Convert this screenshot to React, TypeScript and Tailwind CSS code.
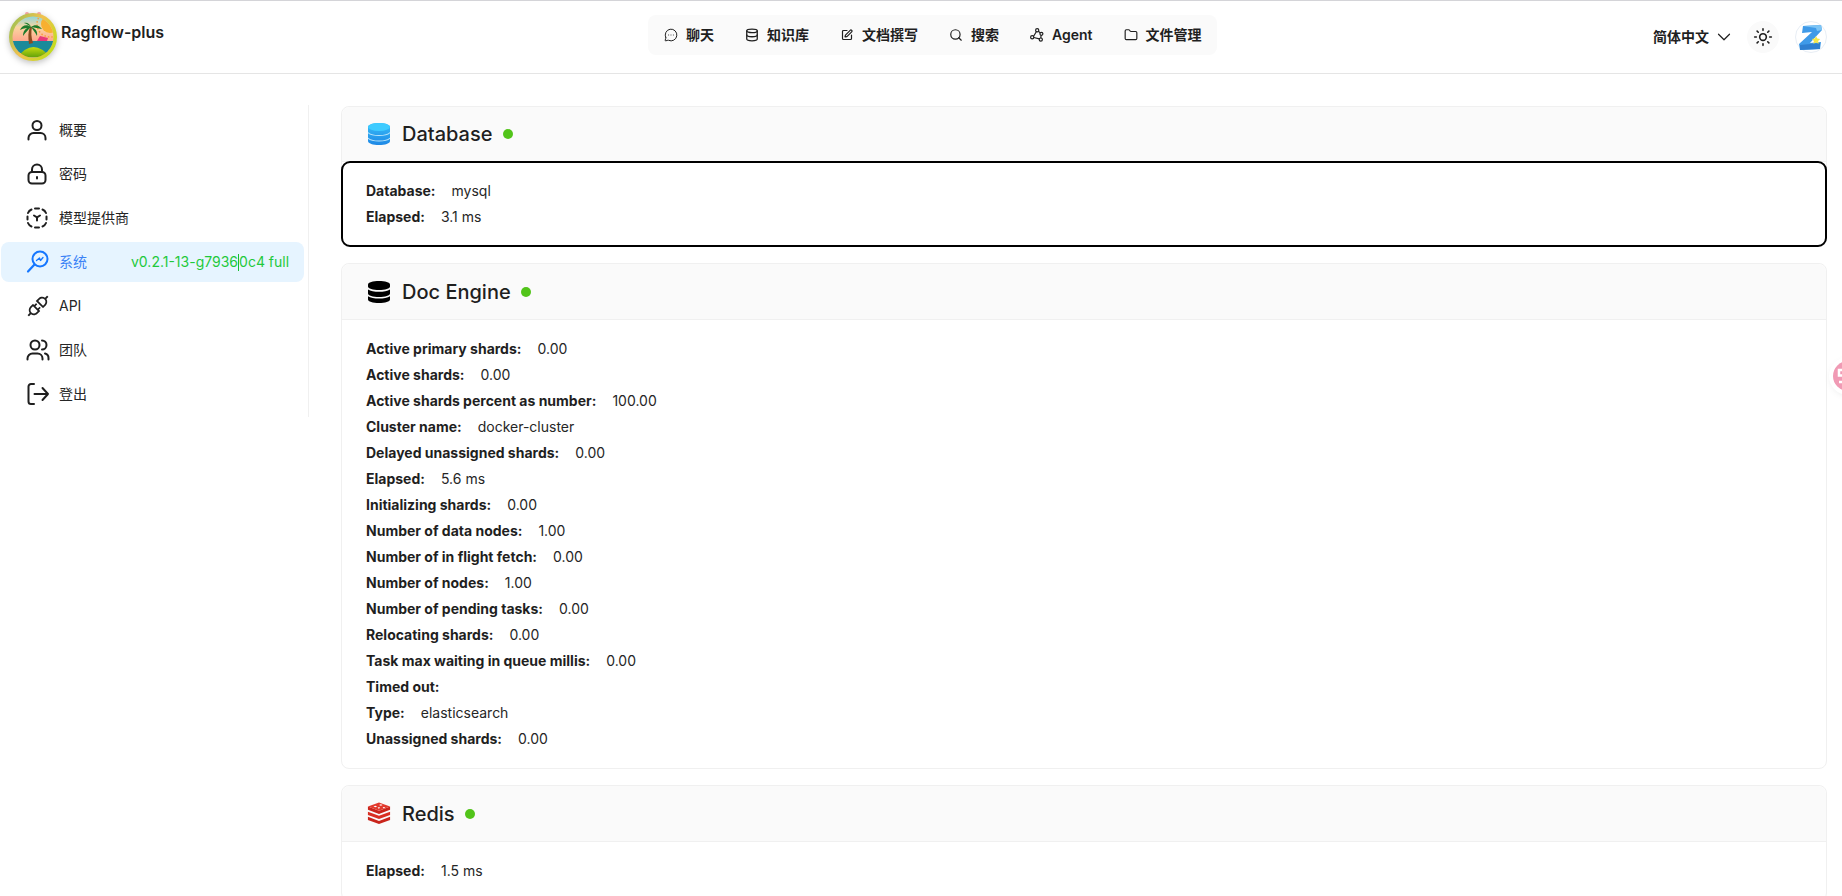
import React from "react";
import { MessageCircleMore, Database, SquarePen, Search, Folder, Sun, ChevronDown } from "lucide-react";
import { AiOutlineApi } from "react-icons/ai";

const font = { fontFamily: 'Inter, "Noto Sans CJK SC", sans-serif' };

function Logo() {
  return (
    <svg width="50" height="52" viewBox="0 0 50 52" className="shrink-0 drop-shadow-[0_2px_3px_rgba(0,0,0,0.25)]">
      <defs>
        <linearGradient id="ring" x1="0" y1="0" x2="1" y2="0.6">
          <stop offset="0" stopColor="#8cc152" />
          <stop offset="0.55" stopColor="#f2c14e" />
          <stop offset="1" stopColor="#c4dc20" />
        </linearGradient>
        <linearGradient id="sky" x1="0" y1="0" x2="0" y2="1">
          <stop offset="0" stopColor="#6fd6e8" />
          <stop offset="0.3" stopColor="#fbd5a0" />
          <stop offset="0.65" stopColor="#ff9c8a" />
        </linearGradient>
        <linearGradient id="isl" x1="0" y1="0" x2="0" y2="1">
          <stop offset="0" stopColor="#c8dc10" />
          <stop offset="1" stopColor="#5a9e0a" />
        </linearGradient>
        <clipPath id="inner"><circle cx="25" cy="27" r="20.5" /></clipPath>
      </defs>
      <circle cx="19" cy="4" r="2" fill="#f0a0a0" />
      <circle cx="31" cy="4" r="2" fill="#f0a0a0" />
      <circle cx="25" cy="27" r="24" fill="url(#ring)" />
      <g clipPath="url(#inner)">
        <rect x="0" y="3" width="50" height="48" fill="url(#sky)" />
        <circle cx="42" cy="14" r="9" fill="#f8b030" />
        <circle cx="42" cy="14" r="13" fill="none" stroke="#f6a040" strokeWidth="1.5" strokeDasharray="1.5 2" />
        <rect x="0" y="31" width="50" height="12" fill="#1a8a9a" />
        <path d="M29 31l3-5 8 2-1 3z" fill="#e83a78" />
        <path d="M9 48Q25 26 43 48z" fill="url(#isl)" />
        <path d="M5 44.500Q25 50 45 44.500L45 52 5 52z" fill="#fff" fillOpacity="0.6" />
        <path d="M21 34c-1-7-1-12 1-17h2c-1 5-1 10 1 16z" fill="#8a4a20" />
        <path d="M23 17c-4-3-9-2-11 3 4-2 7-2 11-3zM23 17c-4 0-8 3-8 9 3-4 5-6 8-9zM23 17c4-3 8-2 11 2-4-1-7-1-11-2zM23 17c4 1 7 4 6 9-2-4-4-6-6-9zM23 17c-1-3-4-5-7-4 3 1 5 2 7 4z" fill="#1d7a2c" />
      </g>
    </svg>
  );
}

function ZAvatar() {
  return (
    <div className="w-8 h-8 rounded-full border border-[#e8eef5] bg-white flex items-center justify-center shrink-0">
      <svg width="26" height="28" viewBox="0 0 26 28">
        <path d="M5 3l18 -1 1 5L12 20l11-1-1 7-20 1-1-6L14 9 4 10z" fill="#3f9ae8" />
        <path d="M5 3l18-1 1 5-5 1-1-3z" fill="#7cc4f5" />
        <path d="M2 22l20-2 0 6-20 1z" fill="#2f7fd0" />
        <path d="M18 13l1.3 2.600 2.900.3-2.100 2 .6 2.900-2.700-1.400-2.600 1.400.5-2.900-2-2 2.900-.3z" fill="#f6e84a" />
      </svg>
    </div>
  );
}

const navItems: { icon: React.ReactNode; label: string }[] = [
  { icon: <MessageCircleMore size={14} strokeWidth={1.7} />, label: "聊天" },
  { icon: <Database size={14} strokeWidth={2.2} />, label: "知识库" },
  { icon: <SquarePen size={12} strokeWidth={2.4} className="mx-px" />, label: "文档撰写" },
  { icon: <Search size={14} strokeWidth={2} />, label: "搜索" },
  {
    icon: (
      <svg width="14" height="14" viewBox="0 0 14 14" fill="none" stroke="currentColor" strokeWidth="1.2">
        <circle cx="7.200" cy="2.300" r="1.600" />
        <circle cx="2.200" cy="9.300" r="1.600" />
        <circle cx="11.400" cy="5.800" r="1.500" />
        <circle cx="10.800" cy="11.600" r="1.600" />
        <path d="M6.300 3.800L3.600 8.300M3.800 9.500l5.500 1.400M8.400 3.300l1.900 1.600M11 7.300l-.1 2.600" />
      </svg>
    ),
    label: "Agent",
  },
  { icon: <Folder size={14} strokeWidth={2} />, label: "文件管理" },
];

const ic = { fill: "none", stroke: "currentColor", strokeWidth: 2, strokeLinecap: "round" as const, strokeLinejoin: "round" as const };

const UserIc = (
  <svg width="22" height="22" viewBox="0 0 22 22" {...ic}>
    <circle cx="11" cy="6.500" r="4.500" />
    <path d="M2.500 20.500v-1.500a5 5 0 0 1 5-5h7a5 5 0 0 1 5 5v1.500" />
  </svg>
);
const LockIc = (
  <svg width="22" height="22" viewBox="0 0 22 22" {...ic}>
    <rect x="2.500" y="9" width="17" height="11.500" rx="3.500" />
    <path d="M6 9V6.500a5 5 0 0 1 10 0V9" />
    <path d="M11 14v1.500" />
  </svg>
);
const BoxIc = (
  <svg width="22" height="22" viewBox="0 0 22 22" {...ic}>
    <path d="M9 1.500h4M9 20.500h4M1.500 9.500v3M20.500 9.500v3" />
    <path d="M5.500 2.500Q3 3.500 2 6M16.500 2.500Q19 3.500 20 6M2 16Q3 18.500 5.500 19.500M20 16Q19 18.500 16.500 19.500" />
    <path d="M8 8.500l3 1.800 3-1.800M11 10.300V13.500" />
  </svg>
);
const ScopeIc = (
  <svg width="24" height="24" viewBox="0 0 24 24" {...ic}>
    <circle cx="14" cy="9" r="7.500" />
    <path d="M8.500 14.500L2 21.500" strokeWidth="2.200" />
    <path d="M10.500 10.500l3-2.500 1 2.500 2.500-3" strokeWidth="1.300" />
  </svg>
);
const UsersIc = (
  <svg width="24" height="24" viewBox="0 0 24 24" {...ic}>
    <circle cx="9" cy="7" r="4.500" />
    <path d="M1.500 21.500v-1a5 5 0 0 1 5-5h5a5 5 0 0 1 5 5v1M16 2.500a4.500 4.500 0 0 1 0 9M19 15.500a4.500 4.500 0 0 1 3.500 4.500v1.500" />
  </svg>
);
const ExitIc = (
  <svg width="24" height="24" viewBox="0 0 24 24" {...ic}>
    <path d="M8 2H5a2.500 2.500 0 0 0-2.500 2.500v15A2.500 2.500 0 0 0 5 22h3" />
    <path d="M8.500 12h13.500M16.500 6l5.500 6-5.500 6" />
  </svg>
);

const sideItems: { icon: React.ReactNode; label: string; active?: boolean }[] = [
  { icon: UserIc, label: "概要" },
  { icon: LockIc, label: "密码" },
  { icon: BoxIc, label: "模型提供商" },
  { icon: ScopeIc, label: "系统", active: true },
  { icon: <AiOutlineApi size={26} className="-ml-[1px]" />, label: "API" },
  { icon: UsersIc, label: "团队" },
  { icon: ExitIc, label: "登出" },
];

function Sidebar() {
  return (
    <aside className="-mt-px w-[309px] h-[312px] shrink-0 border-r border-[#f0f0f0] pt-[5px] flex flex-col gap-1">
      {sideItems.map((it) => (
        <div
          key={it.label}
          className={`ml-px w-[303px] h-10 shrink-0 rounded-lg flex items-center pl-[25px] text-sm ${
            it.active ? "bg-[#e6f4ff] text-[#3b82f6]" : "text-[#262626]"
          }`}
        >
          <span className={`w-[33px] shrink-0 flex items-center ${it.active ? "text-[#1677ff]" : "text-[#1f1f1f]"}`}>{it.icon}</span>
          <span>{it.label}</span>
          {it.active && (
            <span className="ml-[44px] text-[#1fc93c] whitespace-nowrap">
              v0.2.1-13-g7936
              <span className="inline-block w-0 h-[17px] align-[-4px] border-l border-[#17c02e]" />
              0c4 full
            </span>
          )}
        </div>
      ))}
    </aside>
  );
}

const DbBlue = (
  <svg width="22" height="22" viewBox="2 1 20 22" preserveAspectRatio="none">
    <defs>
      <linearGradient id="dbb" x1="0" y1="0" x2="0" y2="1">
        <stop offset="0" stopColor="#38bdf8" />
        <stop offset="1" stopColor="#1e88e5" />
      </linearGradient>
    </defs>
    <path d="M2 5c0-2.500 4.500-4 10-4s10 1.500 10 4v14c0 2.500-4.500 4-10 4S2 21.500 2 19z" fill="url(#dbb)" />
    <ellipse cx="12" cy="5" rx="10" ry="4" fill="#3ecbff" />
    <path d="M2 10.500c1.500 2 5.500 3 10 3s8.500-1 10-3M2 16c1.500 2 5.500 3 10 3s8.500-1 10-3" fill="none" stroke="#b8e4fb" strokeWidth="1" />
  </svg>
);
const DbBlack = (
  <svg width="22" height="22" viewBox="2 1 20 22" preserveAspectRatio="none" fill="#000">
    <path d="M2 4.500c0-2.300 4.500-3.500 10-3.500s10 1.200 10 3.500v2c0 2.300-4.500 3.500-10 3.500S2 8.800 2 6.500z" />
    <path d="M2 9.500c2 1.500 6 2.300 10 2.300s8-.8 10-2.300v4c0 2.300-4.500 3.500-10 3.500s-10-1.200-10-3.500z" />
    <path d="M2 16.200c2 1.500 6 2.300 10 2.300s8-.8 10-2.300v3.300c0 2.300-4.500 3.500-10 3.500S2 21.800 2 19.500z" />
  </svg>
);
const RedisIc = (
  <svg width="24" height="23" viewBox="0 0 26 24" className="-ml-[1px]">
    <path d="M1 15.500l12 4.500 12-4.500v3.500l-12 4.500-12-4.500z" fill="#c9241b" />
    <path d="M1 10l12 4.500L25 10v3.500L13 18 1 13.500z" fill="#d92e22" />
    <path d="M1 4.500v3.500l12 4.500L25 8V4.500L13 9z" fill="#c9241b" />
    <path d="M1 4.500L13 0l12 4.500L13 9z" fill="#e23a2d" />
    <path d="M9 3.500l2 .8-2 .8-2-.8zM15 2l2 .8-2 .8-2-.8zM17 5l3 .3-2 1.300zM11.500 5.500l2.500-.5-1 2z" fill="#fff" />
  </svg>
);

function Card({
  icon,
  title,
  rows,
  focused,
}: {
  icon: React.ReactNode;
  title: string;
  rows: [string, string][];
  focused?: boolean;
}) {
  return (
    <section className="rounded-lg border border-[#f0f0f0] bg-white shrink-0">
      <header className={`${focused ? "h-[55px]" : "h-[56px]"} flex items-center pl-[24px] bg-[#fafafa] rounded-t-lg border-b border-[#f0f0f0]`}>
        <span className="w-[36px] shrink-0 flex items-center pl-[2px]">{icon}</span>
        <span className="text-xl font-medium text-[#1f1f1f]">{title}</span>
        <span className="ml-[10px] w-[10px] h-[10px] rounded-full bg-[#52c41a]" />
      </header>
      <div className={`px-6 py-4 text-sm text-[#262626] ${focused ? "rounded-lg outline-2 -outline-offset-1 outline-black" : ""}`}>
        {rows.map(([k, v]) => (
          <div key={k} className="h-[26px] flex items-center gap-4">
            <span className="font-bold text-[#1f1f1f]">{k}:</span>
            {v && <span>{v}</span>}
          </div>
        ))}
      </div>
    </section>
  );
}

const docRows: [string, string][] = [
  ["Active primary shards", "0.00"],
  ["Active shards", "0.00"],
  ["Active shards percent as number", "100.00"],
  ["Cluster name", "docker-cluster"],
  ["Delayed unassigned shards", "0.00"],
  ["Elapsed", "5.6 ms"],
  ["Initializing shards", "0.00"],
  ["Number of data nodes", "1.00"],
  ["Number of in flight fetch", "0.00"],
  ["Number of nodes", "1.00"],
  ["Number of pending tasks", "0.00"],
  ["Relocating shards", "0.00"],
  ["Task max waiting in queue millis", "0.00"],
  ["Timed out", ""],
  ["Type", "elasticsearch"],
  ["Unassigned shards", "0.00"],
];

export default function App() {
  return (
    <div style={font} className="relative h-screen overflow-hidden bg-white border-t border-[#d4d4d8]">
      <header className="h-[73px] border-b border-[#e5e5e5] flex">
        <div className="w-[648px] shrink-0 flex items-start pl-2 pt-[9px]">
          <Logo />
          <span className="ml-[3px] mt-[10px] text-base font-semibold text-[#1f1f1f]">Ragflow-plus</span>
        </div>
        <nav className="mt-[14px] h-10 w-[569px] shrink-0 rounded-lg bg-[#fafafa] flex items-center gap-[31px] px-4 text-sm font-semibold text-[#1f1f1f]">
          {navItems.map((n) => (
            <div key={n.label} className="flex items-center gap-2 whitespace-nowrap">
              {n.icon}
              <span>{n.label}</span>
            </div>
          ))}
        </nav>
        <div className="ml-auto pr-[15px] flex items-center h-[71px]">
          <span className="text-sm font-semibold text-[#1f1f1f]">简体中文</span>
          <ChevronDown size={22} strokeWidth={1.3} className="ml-1 mr-px text-[#1f1f1f]" />
          <span className="ml-[11px] w-8 h-8 rounded-full bg-[#fafafa] flex items-center justify-center">
            <Sun size={20} strokeWidth={1.9} className="text-[#1f1f1f]" />
          </span>
          <span className="ml-4"><ZAvatar /></span>
        </div>
      </header>
      <div className="flex pt-[32px] gap-8 pr-[15px]">
        <Sidebar />
        <main className="flex-1 flex flex-col gap-4 min-w-0">
          <Card icon={DbBlue} title="Database" focused rows={[["Database", "mysql"], ["Elapsed", "3.1 ms"]]} />
          <Card icon={DbBlack} title="Doc Engine" rows={docRows} />
          <Card icon={RedisIc} title="Redis" rows={[["Elapsed", "1.5 ms"]]} />
        </main>
      </div>
      <div className="absolute left-[1833px] top-[360px] w-[30px] h-[30px] rounded-full bg-[#f09ab4] ring-4 ring-white shadow-[0_2px_8px_rgba(0,0,0,0.15)] flex items-center pl-[4px]">
        <svg width="9" height="16" viewBox="0 0 9 16" fill="none" stroke="#fff" strokeWidth="2.500">
          <path d="M9 2H2v5.500h7M2 14h7" />
        </svg>
      </div>
    </div>
  );
}
